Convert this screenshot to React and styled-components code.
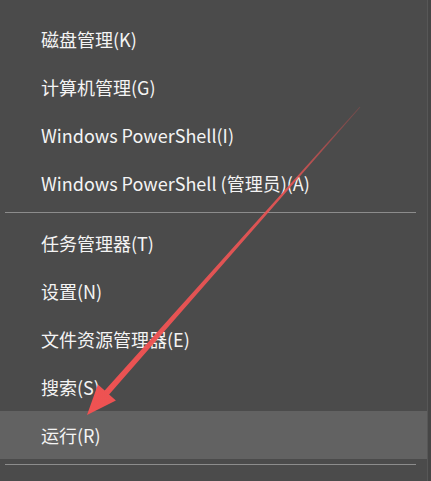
import React from "react";
import styled, { createGlobalStyle } from "styled-components";

const GlobalStyle = createGlobalStyle`
  html, body {
    margin: 0;
    padding: 0;
    background: #464646;
    overflow: hidden;
  }
`;

const Page = styled.div`
  position: relative;
  width: 431px;
  height: 481px;
  overflow: hidden;
`;

const Menu = styled.div`
  width: 428px;
  height: 481px;
  padding-top: 15px;
  box-sizing: border-box;
  background: #4b4b4b;
  border-right: 1px solid #575757;
  font-family: "Noto Sans CJK SC", "Noto Sans", sans-serif;
`;

const Item = styled.div`
  height: 48px;
  display: flex;
  align-items: center;
  padding-left: 41px;
  font-size: 18px;
  color: #f4f4f4;
  background: ${(p) => (p.$active ? "#626262" : "transparent")};
  white-space: nowrap;
`;

const Separator = styled.div`
  height: 1px;
  margin: 5px 11px 6px 5px;
  background: #8c8c8c;
`;

const ArrowLayer = styled.svg`
  position: absolute;
  top: 0;
  left: 0;
  pointer-events: none;
`;

const groups = [
  ["磁盘管理(K)", "计算机管理(G)", "Windows PowerShell(I)", "Windows PowerShell (管理员)(A)"],
  ["任务管理器(T)", "设置(N)", "文件资源管理器(E)", "搜索(S)", "运行(R)"],
];

const Arrow = () => (
  <ArrowLayer width="431" height="481" viewBox="0 0 431 481">
    <defs>
      <linearGradient id="shaft" x1="360" y1="107" x2="87" y2="415" gradientUnits="userSpaceOnUse">
        <stop offset="0" stopColor="#b84a4a" stopOpacity="0.35" />
        <stop offset="0.25" stopColor="#e85555" stopOpacity="0.9" />
        <stop offset="1" stopColor="#f05252" />
      </linearGradient>
    </defs>
    <polygon
      fill="url(#shaft)"
      points="360.3,107.3 109.1,394.6 115.9,400.6 87,415 97.9,384.6 104.7,390.6 359.7,106.7"
    />
  </ArrowLayer>
);

export default function App() {
  return (
    <Page>
      <GlobalStyle />
      <Menu>
        {groups.map((items, gi) => (
          <React.Fragment key={gi}>
            {items.map((label) => (
              <Item key={label} $active={label === "运行(R)"}>
                {label}
              </Item>
            ))}
            <Separator />
          </React.Fragment>
        ))}
      </Menu>
      <Arrow />
    </Page>
  );
}
